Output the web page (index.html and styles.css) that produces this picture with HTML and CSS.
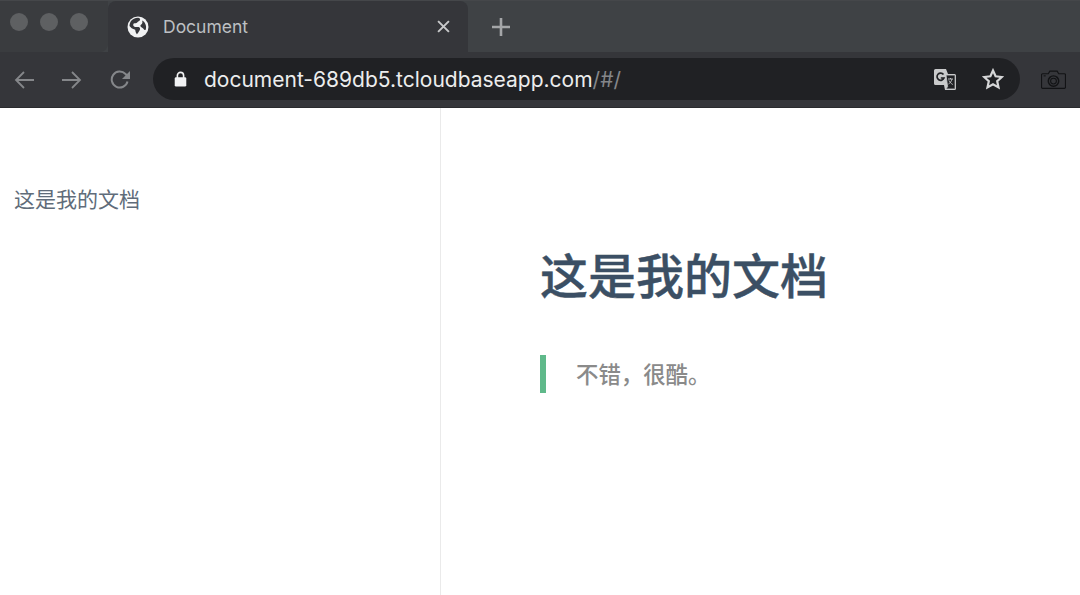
FILE: index.html
```html
<!DOCTYPE html>
<html lang="zh">
<head>
<meta charset="utf-8">
<title>Document</title>
<link rel="stylesheet" href="styles.css">
</head>
<body>
<header class="browser">
  <div class="tabstrip">
    <div class="lights"><i class="light"></i><i class="light"></i><i class="light"></i></div>
    <div class="tab">
      <svg class="globe" viewBox="0 0 22 22"><circle cx="11" cy="11" r="10.500" fill="#f1f2f3"/><path d="M4 5c1.500-2 4-3.200 7-3.300 1.500 0 2.500 1 2 2.300-.5 1.200-2 1.400-2.800 2.400-.8 1-2.500.3-3.500 1.100-1 1-.5 3 1.200 3.400 1.500.4 3-.3 4.300.4 1.300.8 1 2.400.2 3.400-1 1.200-1.500 2.800-2.500 3.500-1-1-1.500-3-1.700-4.500C5.500 13 3.500 11.500 2.500 10c0-1.800.5-3.500 1.500-5z" fill="#35363a"/><path d="M15 4.500c2 .8 3.600 3 4 5.500.2 1.500 0 3-.5 4-1 .3-1.700-.5-2.300-1.500-.6-1-2.200-1.300-2.700-2.300-.4-1 .6-1.700 1.300-2.300.8-.8.800-2.300.2-3.400z" fill="#35363a"/></svg>
      <span class="tab-title">Document</span>
      <svg class="close" viewBox="0 0 12 12"><path d="M1 1l10 10M11 1L1 11" stroke="#c8c9ca" stroke-width="1.800" fill="none"/></svg>
    </div>
    <svg class="plus" viewBox="0 0 18 18"><path d="M9 0v18M0 9h18" stroke="#a4a6a8" stroke-width="2.600" fill="none"/></svg>
  </div>
  <div class="toolbar">
    <svg class="nav" viewBox="0 0 20 20"><path d="M20 10H2M10 2l-8 8 8 8" stroke="#85878a" stroke-width="1.800" fill="none"/></svg>
    <svg class="nav" viewBox="0 0 20 20"><path d="M0 10h18M10 2l8 8-8 8" stroke="#85878a" stroke-width="1.800" fill="none"/></svg>
    <svg class="nav" viewBox="0 0 20 20"><path d="M17.500 11.500A8 8 0 1 1 15.500 4L18 6.500" stroke="#85878a" stroke-width="2" fill="none"/><path d="M20 1v8h-8z" fill="#85878a"/></svg>
    <div class="omnibox">
      <svg class="lock" viewBox="0 0 14 18"><path d="M3.500 8V5a3.500 3.500 0 0 1 7 0v3" stroke="#f1f2f3" stroke-width="1.800" fill="none"/><rect x="0.500" y="7" width="13" height="10.500" rx="1.500" fill="#f1f2f3"/></svg>
      <span class="url">document-689db5.tcloudbaseapp.com<span class="url-path">/#/</span></span>
      <svg class="translate" viewBox="0 0 22 21"><path d="M1.500 0H12l2 5h6.500A1.500 1.500 0 0 1 22 6.500v13a1.500 1.500 0 0 1-1.500 1.500H11l-1-5H1.500A1.500 1.500 0 0 1 0 14.500v-13A1.500 1.500 0 0 1 1.500 0z" fill="#c9cacb"/><path d="M12 6h8.500a.6.6 0 0 1 .6.6v12.800a.6.6 0 0 1-.6.6H11.800l1.800-2.300z" fill="#202124" stroke="#c9cacb" stroke-width="0.800"/><path d="M9.500 5.500A3.600 3.600 0 1 0 10 9H6.800" stroke="#202124" stroke-width="1.700" fill="none"/><path d="M14 10h5M16.500 9v1M18 10c-.6 2.500-2 4.200-3.500 5M15 11.500c.7 1.500 2 3 3.800 4" stroke="#c9cacb" stroke-width="0.900" fill="none"/></svg>
      <svg class="star" viewBox="0 0 22 22"><path d="M11 2.500l2.600 5.800 6.300.7-4.700 4.200 1.300 6.200L11 16.200l-5.500 3.200 1.300-6.200L2.100 9l6.300-.7z" stroke="#d6d7d8" stroke-width="2.200" fill="none"/></svg>
    </div>
    <svg class="camera" viewBox="0 0 24 18"><path d="M1.500 3.500H7L8.500 1h7L17 3.500h5.500a1 1 0 0 1 1 1v12a1 1 0 0 1-1 1h-21a1 1 0 0 1-1-1v-12a1 1 0 0 1 1-1z" stroke="#121315" stroke-width="1.100" fill="none"/><circle cx="12" cy="10.500" r="5" stroke="#121315" stroke-width="1.400" fill="none"/><circle cx="12" cy="10.500" r="2.800" stroke="#121315" stroke-width="1" fill="none"/><path d="M2.500 5.500h2" stroke="#121315" stroke-width="1"/></svg>
  </div>
</header>
<div class="page">
  <aside class="sidebar"><a class="side-link">这是我的文档</a></aside>
  <main class="content">
    <h1 class="title">这是我的文档</h1>
    <blockquote class="quote">不错，很酷。</blockquote>
  </main>
</div>
</body>
</html>
```
FILE: styles.css
```css
* { box-sizing: border-box; }
html, body { margin: 0; height: 100%; overflow: hidden; background: #fff; }
body { font-family: "Inter", "Liberation Sans", "Noto Sans CJK SC", sans-serif; display: flex; flex-direction: column; }
.browser { flex: none; height: 108px; background: #35363a; border-bottom: 1px solid #2a2b2e; }
.tabstrip { height: 52px; background: #3f4245; display: flex; align-items: center; border-top: 1px solid #45474a; }
.lights { width: 108px; height: 51px; background: #3a3c3f; border-bottom-right-radius: 8px; display: flex; align-items: center; gap: 12px; padding: 0 0 10px 10px; align-self: flex-start; }
.light { width: 18px; height: 18px; border-radius: 50%; background: #5e6062; }
.tab { width: 360px; height: 51px; background: #35363a; border-radius: 8px 8px 0 0; display: flex; align-items: center; padding: 0 18px 0 19px; align-self: flex-start; }
.globe { width: 22px; height: 22px; flex: none; }
.tab-title { margin-left: 14px; flex: 1; color: #bdc0c3; font-size: 17.500px; }
.close { width: 13px; height: 13px; }
.plus { width: 18px; height: 18px; margin-left: 24px; }
.toolbar { height: 55px; display: flex; align-items: center; padding: 0 15px 0 14px; }
.nav { width: 20px; height: 20px; margin-right: 28px; flex: none; }
.nav:nth-child(3) { margin-right: 23px; }
.omnibox { flex: none; width: 867px; height: 42px; margin-top: -1px; background: #202124; border-radius: 21px; display: flex; align-items: center; padding: 0 16px 0 21px; }
.lock { width: 13px; height: 16px; flex: none; }
.url { margin-left: 17px; flex: 1; color: #eceded; font-size: 21px; white-space: nowrap; }
.url-path { color: #84868a; }
.translate { width: 22px; height: 21px; margin-right: 26px; }
.star { width: 22px; height: 22px; }
.camera { width: 25px; height: 19px; margin-left: 21px; flex: none; }
.page { flex: 1; display: flex; min-height: 0; }
.sidebar { width: 441px; flex: none; border-right: 1px solid #eaeaea; padding: 79px 14px 0; }
.side-link { display: block; color: #606c7a; font-size: 21px; line-height: 25px; }
.content { flex: 1; padding: 135px 0 0 99px; }
.title { margin: 0; color: #3b4f64; font-size: 48px; line-height: 68px; font-weight: 500; -webkit-text-stroke: 0.4px #3b4f64; }
.quote { margin: 44px 0 0; height: 38px; border-left: 6px solid #5fb98a; padding: 1px 0 0 30px; color: #8a8a8a; font-size: 22.400px; line-height: 38px; font-weight: 500; }
```
